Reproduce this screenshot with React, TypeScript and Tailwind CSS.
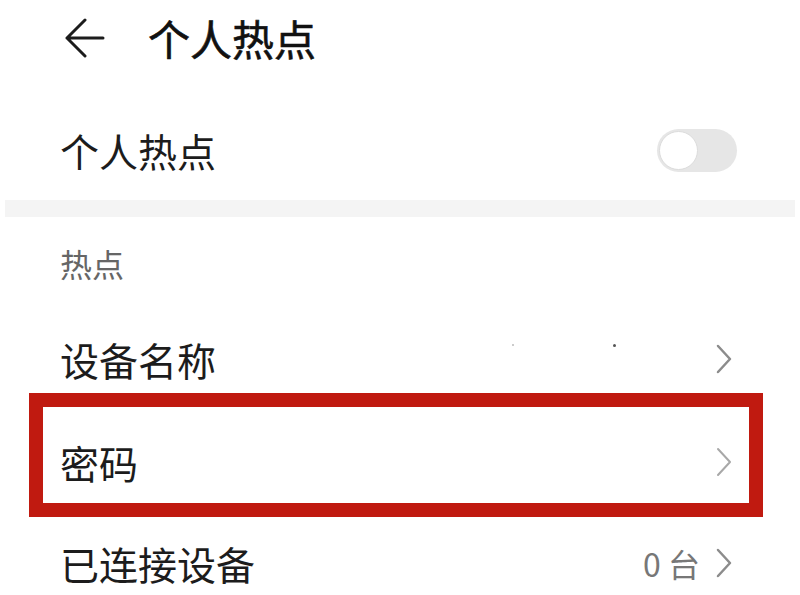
import React from 'react';

const font = { fontFamily: '"Noto Sans CJK SC", "Noto Sans", sans-serif' };

const Chevron: React.FC<{ light?: boolean }> = ({ light }) => (
  <svg width="16" height="30" viewBox="0 0 16 30" fill="none" className="shrink-0">
    <path
      d="M2 2 L14 15 L2 28"
      stroke={light ? '#a8a8a8' : '#8c8c8c'}
      strokeWidth={light ? 2 : 2.5}
      strokeLinecap="round"
      strokeLinejoin="round"
    />
  </svg>
);

export default function App() {
  return (
    <div
      className="relative w-[800px] h-[595px] overflow-hidden bg-white text-[#1c1c1c]"
      style={font}
    >
      {/* Header */}
      <div className="flex items-center h-[76px] pl-[65px]">
        <svg width="40" height="40" viewBox="0 0 40 40" fill="none" className="shrink-0">
          <path
            d="M20 2 L2 20 L20 38 M2 20 H38"
            stroke="#1c1c1c"
            strokeWidth="3"
            strokeLinecap="round"
            strokeLinejoin="round"
          />
        </svg>
        <span className="ml-[43px] text-[42px] leading-none text-[#111111] [-webkit-text-stroke:0.6px_#111111]">
          个人热点
        </span>
      </div>

      {/* Hotspot toggle row */}
      <div className="mt-[24px] flex items-center justify-between h-[100px] pl-[60px] pr-[63px]">
        <span className="text-[39px] leading-none">个人热点</span>
        <div className="flex items-center w-[80px] h-[43px] rounded-full bg-[#e6e6e6] px-[2px]">
          <div className="w-[39px] h-[39px] rounded-full bg-white border border-[#dcdcdc]" />
        </div>
      </div>

      {/* Divider band */}
      <div className="mx-[5px] h-[17px] bg-[#f4f4f4]" />

      {/* Section header */}
      <div className="flex items-center h-[92px] pl-[60px]">
        <span className="text-[32px] leading-none text-[#666666]">热点</span>
      </div>

      {/* Device name */}
      <div className="flex items-center justify-between h-[100px] pl-[60px] pr-[68px]">
        <span className="text-[39px] leading-none">设备名称</span>
        <div className="flex items-center">
          <div className="flex items-start h-[30px] gap-[99px] mr-[100px]">
            <span className="w-[2px] h-[2px] rounded-full bg-[#bbbbbb]" />
            <span className="w-[3px] h-[3px] rounded-full bg-[#555555]" />
          </div>
          <Chevron />
        </div>
      </div>

      {/* Password */}
      <div className="flex items-center justify-between h-[106px] pl-[60px] pr-[68px]">
        <span className="text-[39px] leading-none">密码</span>
        <Chevron light />
      </div>

      {/* Connected devices */}
      <div className="flex items-center justify-between h-[96px] pl-[60px] pr-[68px]">
        <span className="text-[39px] leading-none">已连接设备</span>
        <div className="flex items-center gap-[16px]">
          <span className="text-[32px] leading-none text-[#777777]">0 台</span>
          <Chevron />
        </div>
      </div>

      {/* Red annotation box */}
      <div className="absolute left-[29px] top-[393px] w-[734px] h-[124px] border-[14px] border-[#c01a10] pointer-events-none" />
    </div>
  );
}
